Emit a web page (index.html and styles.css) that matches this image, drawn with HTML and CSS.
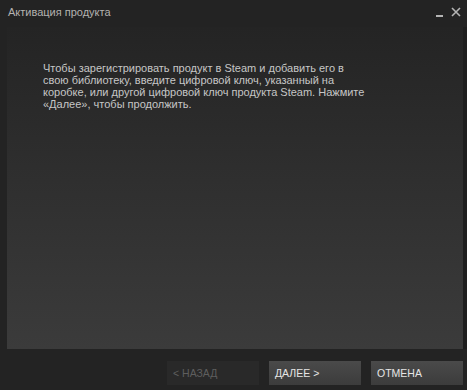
FILE: index.html
```html
<!DOCTYPE html>
<html lang="ru">
<head>
<meta charset="utf-8">
<link rel="stylesheet" href="styles.css">
</head>
<body>
<div class="window">
  <div class="titlebar">
    <span class="title">Активация продукта</span>
    <div class="controls">
      <span class="min"></span>
      <svg class="close" width="10" height="10" viewBox="0 0 10 10"><path d="M1 1L9 9M9 1L1 9" stroke="#b4b4b4" stroke-width="1.6"/></svg>
    </div>
  </div>
  <div class="main">
    <div class="panel">
      <p class="msg">Чтобы зарегистрировать продукт в Steam и добавить его в свою библиотеку, введите цифровой ключ, указанный на коробке, или другой цифровой ключ продукта Steam. Нажмите «Далее», чтобы продолжить.</p>
    </div>
    <div class="edge"></div>
  </div>
  <div class="footer">
    <button class="btn disabled">&lt; НАЗАД</button>
    <button class="btn">ДАЛЕЕ &gt;</button>
    <button class="btn">ОТМЕНА</button>
  </div>
</div>
</body>
</html>
```

FILE: styles.css
```css
html, body {
  margin: 0;
  padding: 0;
  background: #232323;
  font-family: "Liberation Sans", Arial, sans-serif;
}
.window {
  width: 467px;
  height: 390px;
  display: flex;
  flex-direction: column;
  background: #232323;
}
.titlebar {
  height: 27px;
  display: flex;
  align-items: flex-start;
  justify-content: space-between;
  padding: 0 6px 0 8px;
}
.title {
  font-size: 11px;
  color: #b4b2b0;
  margin-top: 6px;
}
.controls {
  display: flex;
  align-items: flex-end;
  gap: 8px;
  margin-top: 7px;
}
.min {
  width: 7px;
  height: 2px;
  background: #b4b4b4;
}
.close { display: block; }
.main {
  display: flex;
  height: 322px;
}
.panel {
  flex: 1;
  margin-left: 7px;
  background: linear-gradient(to bottom, #242424 0%, #3b3b3b 100%);
  padding: 35px 0 0 36px;
}
.edge {
  width: 4px;
  background: #1e1e1e;
}
.msg {
  margin: 0;
  width: 324px;
  font-size: 11px;
  line-height: 12px;
  color: #c6c6c6;
}
.footer {
  display: flex;
  justify-content: flex-end;
  gap: 10px;
  padding: 12px 4px 0 0;
}
.btn {
  width: 92px;
  height: 24px;
  border: 0;
  padding: 0 0 0 6px;
  text-align: left;
  font-family: "Liberation Sans", Arial, sans-serif;
  font-size: 10.5px;
  color: #e6e6e6;
  background: linear-gradient(to bottom, #4a4a4a, #3c3c3c);
}
.btn.disabled {
  background: #292929;
  color: #5e5e5e;
}
```
